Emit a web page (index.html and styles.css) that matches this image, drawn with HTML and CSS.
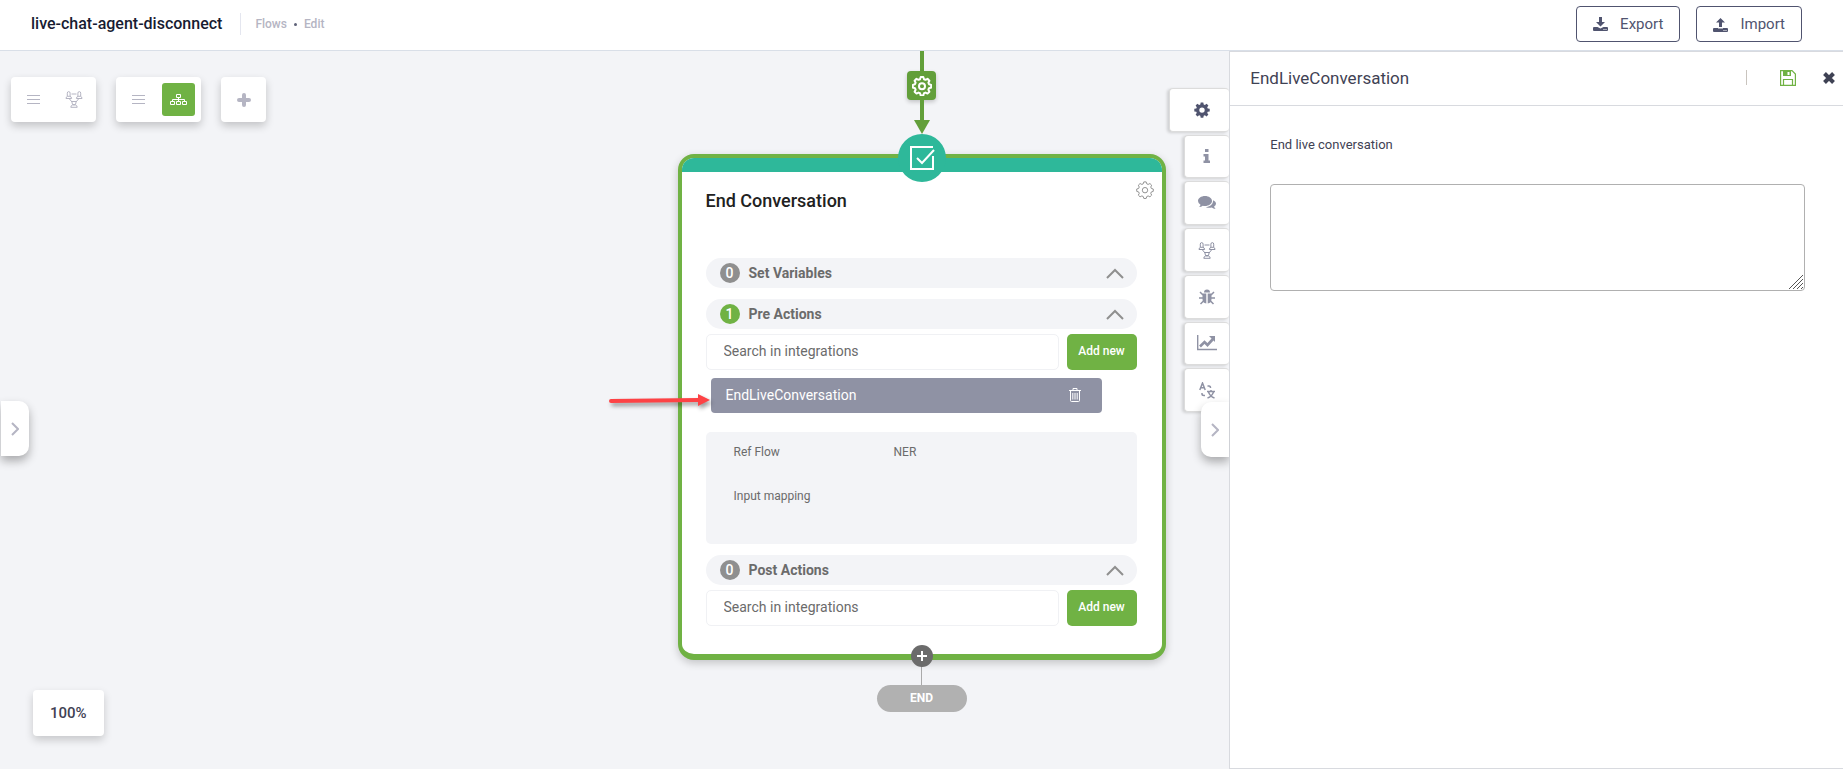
FILE: index.html
```
<!DOCTYPE html>
<html lang="en">
<head>
  <meta charset="UTF-8" />
  <meta name="viewport" content="width=device-width, initial-scale=1" />
  <title>live-chat-agent-disconnect - Flows</title>
  <link rel="stylesheet" href="styles.css">
</head>
<body>
  <!-- shared icons -->
  <svg class="icon-defs" aria-hidden="true">
    <symbol id="icon-cog" viewBox="0 0 20 20">
      <path d="M8.700 1h2.600l.7 2.200 1.500.6 2-1 1.900 1.900-1 2 .6 1.500 2.200.7v2.600l-2.200.7-.6 1.500 1 2-1.900 1.900-2-1-1.500.6-.7 2.200H8.700L8 17.200l-1.500-.6-2 1-1.900-1.900 1-2-.6-1.500L.8 11.500V8.900L3 8.200l.6-1.500-1-2 1.900-1.900 2 1L8 3.200z" stroke-linejoin="round" />
      <circle cx="10" cy="10.200" r="3" />
    </symbol>
    <symbol id="icon-team" viewBox="0 0 18 17">
      <path d="M6.500 3h5M4.500 8l2.500 3M13.500 8L11 11" />
      <path d="M2.300 5.400V2.200Q2.300.6 3.700.6t1.400 1.600v3.200M1 7.500q0-1.800 1.500-2.200h2.400q1.700.4 1.700 2.200zM12.900 5.400V2.200q0-1.600 1.400-1.600t1.400 1.600v3.200M11.400 7.500q0-1.800 1.700-2.200h2.400q1.500.4 1.500 2.200z" />
      <path d="M6.800 10.500h4.400l-.7 3H7.500zM5.800 16.300q0-1.800 1.700-2.300h3q1.700.5 1.700 2.300z" />
    </symbol>
    <symbol id="icon-up" viewBox="0 0 18 11">
      <path d="M1 10l8-8 8 8" />
    </symbol>
    <symbol id="icon-right" viewBox="0 0 8 14">
      <path d="M1 1l6 6-6 6" />
    </symbol>
  </svg>

  <header class="header">
    <h1 class="flow-name">live-chat-agent-disconnect</h1>
    <nav class="breadcrumb">
      <a href="#">Flows</a>
      <span class="dot"></span>
      <a href="#">Edit</a>
    </nav>
    <div class="header-actions">
      <button class="btn-outline">
        <svg width="15" height="15" viewBox="0 0 15 15" fill="currentColor"><path d="M6 0h3v5h3l-4.500 4.500L3 5h3z" /><path d="M1 10h3.500l3 1.500 3-1.500H14q1 0 1 1v2q0 1-1 1H1q-1 0-1-1v-2q0-1 1-1zm9.500 2v1h1v-1zm2 0v1h1v-1z" fill-rule="evenodd" /></svg>
        Export
      </button>
      <button class="btn-outline">
        <svg width="15" height="15" viewBox="0 0 15 15" fill="currentColor"><path d="M7.500 1L12 5.500H9V10H6V5.500H3z" /><path d="M1 11h4v.5h5V11h4q1 0 1 1v2q0 1-1 1H1q-1 0-1-1v-2q0-1 1-1zm9.500 2v1h1v-1zm2 0v1h1v-1z" fill-rule="evenodd" /></svg>
        Import
      </button>
    </div>
  </header>

  <main class="workspace">
    <section class="canvas">
      <div class="connector">
        <span class="line"></span>
        <button class="connector-cog" aria-label="Connection settings">
          <svg class="stroke" width="20" height="20"><use href="#icon-cog" /></svg>
        </button>
        <span class="line"></span>
        <span class="arrow-head"></span>
      </div>

      <article class="node">
        <div class="node-badge">
          <svg width="26" height="26" viewBox="0 0 26 26" fill="none" stroke="#fff" stroke-width="2"><path d="M24 11v13H2V2h22" /><path d="M8 13l5 5L25 5" /></svg>
        </div>
        <div class="node-bar"></div>
        <button class="node-cog" aria-label="Node settings">
          <svg class="stroke" width="18" height="18"><use href="#icon-cog" /></svg>
        </button>

        <div class="node-body">
          <h2 class="node-title">End Conversation</h2>

          <button class="section">
            <span class="count">0</span>Set Variables
            <svg class="stroke chevron" width="18" height="11"><use href="#icon-up" /></svg>
          </button>

          <button class="section">
            <span class="count active">1</span>Pre Actions
            <svg class="stroke chevron" width="18" height="11"><use href="#icon-up" /></svg>
          </button>
          <div class="search-row">
            <input type="text" placeholder="Search in integrations" aria-label="Search in integrations">
            <button class="btn-add">Add new</button>
          </div>

          <div class="integration">
            <span>EndLiveConversation</span>
            <button aria-label="Delete">
              <svg width="12" height="14" viewBox="0 0 12 14" fill="none" stroke="currentColor"><path d="M0 2.500h12M4 2V.5h4V2M1.500 3v9.500q0 1 1 1h7q1 0 1-1V3M3.800 5v6.500M6 5v6.500M8.200 5v6.500" /></svg>
            </button>
          </div>

          <dl class="details">
            <dt>Ref Flow</dt><dd>NER</dd>
            <dt>Input mapping</dt><dd></dd>
          </dl>

          <button class="section">
            <span class="count">0</span>Post Actions
            <svg class="stroke chevron" width="18" height="11"><use href="#icon-up" /></svg>
          </button>
          <div class="search-row">
            <input type="text" placeholder="Search in integrations" aria-label="Search in integrations">
            <button class="btn-add">Add new</button>
          </div>
        </div>

        <svg class="pointer" width="106" height="24" viewBox="0 0 106 24" aria-hidden="true"><path d="M4 12l88-1" stroke="#fd4245" stroke-width="4" stroke-linecap="round" /><path d="M91 5l12 6-12 6z" fill="#fd4245" /></svg>
        <button class="node-plus" aria-label="Add step">
          <svg width="10" height="10" viewBox="0 0 10 10" stroke="#fff" stroke-width="2"><path d="M0 5h10M5 0v10" /></svg>
        </button>
      </article>
      <span class="end-line"></span>
      <div class="end">END</div>
    </section>

    <div class="toolbars">
      <div class="toolbar">
        <button aria-label="List">
          <svg class="stroke" width="13" height="10" viewBox="0 0 13 10"><path d="M0 .5h13M0 4.500h13M0 8.500h13" /></svg>
        </button>
        <button aria-label="Team"><svg class="stroke" width="18" height="17"><use href="#icon-team" /></svg></button>
      </div>
      <div class="toolbar">
        <button aria-label="List view">
          <svg class="stroke" width="13" height="10" viewBox="0 0 13 10"><path d="M0 .5h13M0 4.500h13M0 8.500h13" /></svg>
        </button>
        <button class="selected" aria-label="Tree view">
          <svg width="17" height="13" viewBox="0 0 17 13" fill="none" stroke="currentColor"><path d="M6.500 1.500h4v3h-4zM.500 8.500h4v3h-4zM6.500 8.500h4v3h-4zM12.500 8.500h4v3h-4zM8.500 4.500v4M2.500 8.500v-2h12v2" /></svg>
        </button>
      </div>
      <div class="toolbar">
        <button aria-label="Add"><svg width="14" height="14" viewBox="0 0 14 14" stroke="currentColor" stroke-width="4" stroke-linecap="round"><path d="M2 7h10M7 2v10" /></svg></button>
      </div>
    </div>

    <button class="handle handle-left" aria-label="Open menu"><svg class="stroke" width="8" height="14"><use href="#icon-right" /></svg></button>
    <div class="zoom-level">100%</div>

    <aside class="panel">
      <div class="tabs">
        <button class="current" aria-label="Settings">
          <svg width="16" height="16" viewBox="0 0 16 16" fill="currentColor"><path fill-rule="evenodd" d="M6.700.5h2.600l.4 2 1.200.5 1.700-1.200 1.800 1.800L13.200 5.300l.5 1.200 2 .3v2.600l-2 .4-.5 1.200 1.200 1.600-1.800 1.800-1.700-1.200-1.200.5-.4 2H6.700l-.4-2-1.200-.5-1.700 1.200-1.800-1.800L2.800 11l-.5-1.200-2-.4V6.800l2-.3.5-1.200L1.600 3.600l1.800-1.800L5.100 3l1.200-.5zM8 5.400a2.700 2.700 0 100 5.400 2.700 2.700 0 000-5.400z" /></svg>
        </button>
        <button aria-label="Info">
          <svg width="8" height="15" viewBox="0 0 8 15" fill="currentColor"><path d="M2 0h3.500v3H2zM.5 5h5v6.500H7V14H.5v-2.500H2v-4H.5z" /></svg>
        </button>
        <button aria-label="Comments">
          <svg width="18" height="14" viewBox="0 0 18 14" fill="currentColor"><path d="M7 0c3.900 0 7 2.200 7 5s-3.100 5-7 5q-1.200 0-2.200-.3Q3.200 11 1 11.100q1.300-1.200 1.500-2.400Q0 7.200 0 5c0-2.800 3.100-5 7-5z" /><path d="M15 4.200c2 .8 3 2 3 3.500q0 1.700-1.900 2.900.3 1.300 1.500 2.400-2.200-.1-3.900-1.400-3.200.7-6-.6C11.500 11 15.300 8.600 15 4.200z" /></svg>
        </button>
        <button aria-label="Team"><svg class="stroke" width="18" height="17"><use href="#icon-team" /></svg></button>
        <button aria-label="Debug">
          <svg width="16" height="16" viewBox="0 0 16 16" fill="currentColor"><path d="M5 3.500Q5 .5 8 .5t3 3z" /><path d="M3.500 4.500h3.800v10Q3.500 14 3.500 10zM8.700 4.500h3.800V10q0 4-3.800 4.500z" /><path d="M1 3l3 3M15 3l-3 3M0 9h4M12 9h4M1.500 15L5 11.500M14.500 15L11 11.500" stroke="currentColor" stroke-width="1.500" /></svg>
        </button>
        <button aria-label="Analytics">
          <svg width="20" height="16" viewBox="0 0 20 16" fill="none" stroke="currentColor"><path d="M.7 0v14.500H20" stroke-width="1.400" /><path d="M3 11.500l4.500-4.500 3 3L16 4" stroke-width="2.600" /><path d="M12 1h6v6z" fill="currentColor" stroke="none" /></svg>
        </button>
        <button aria-label="Language">
          <svg width="16" height="17" viewBox="0 0 16 17" fill="none" stroke="currentColor" stroke-width="1.500"><path d="M.8 8L3.500 1l2.700 7M1.500 5.800h4M8.500 4H10q1.500 0 1.500 2M3 11v1q0 1.500 2 1.500h1M8 9.500h8M12 8v1.500M9.500 10q1.500 4.500 6 6M14.500 10q-1.500 4.500-6 6" /></svg>
        </button>
      </div>
      <button class="handle handle-right" aria-label="Close panel"><svg class="stroke" width="8" height="14"><use href="#icon-right" /></svg></button>

      <div class="panel-header">
        <h2>EndLiveConversation</h2>
        <span class="divider"></span>
        <button class="save" aria-label="Save">
          <svg width="16" height="16" viewBox="0 0 16 16" fill="none" stroke="currentColor"><path d="M.6.600h11.400L15.400 4v11.400H.600z" stroke-width="1.200" /><path d="M3.500 15V9.500h9V15" stroke-width="1.200" /><path d="M3 1h8v5H3zm4.500 1v3h2V2z" fill="currentColor" fill-rule="evenodd" stroke="none" /></svg>
        </button>
        <button class="close" aria-label="Close">
          <svg width="12" height="12" viewBox="0 0 12 12" stroke="currentColor" stroke-width="4"><path d="M1.500 1.500l9 9M10.500 1.500l-9 9" /></svg>
        </button>
      </div>
      <div class="panel-body">
        <label for="message">End live conversation</label>
        <div class="textarea-wrap">
          <textarea id="message"></textarea>
          <svg class="grip" width="14" height="14" viewBox="0 0 14 14" stroke="#555"><path d="M0 14L14 0M4 14L14 4M8 14l6-6M12 14l2-2" /></svg>
        </div>
      </div>
    </aside>
  </main>
</body>
</html>
```

FILE: styles.css
```
* {
  box-sizing: border-box;
}

html, body {
  margin: 0;
  height: 100%;
}

body {
  display: flex;
  flex-direction: column;
  overflow: hidden;
  background: #fff;
  font-family: Roboto, "Liberation Sans", sans-serif;
  font-size: 14px;
  color: #3f4254;
}

h1, h2, dl, dd {
  margin: 0;
}

button {
  display: flex;
  align-items: center;
  justify-content: center;
  padding: 0;
  border: none;
  background: none;
  font: inherit;
  color: inherit;
  cursor: pointer;
}

svg {
  display: block;
  flex: none;
}

.icon-defs {
  position: absolute;
  width: 0;
  height: 0;
}

.stroke {
  fill: none;
  stroke: currentColor;
}

/* header */
.header {
  display: flex;
  align-items: center;
  flex: none;
  height: 51px;
  padding: 0 41px 2px 31px;
  border-bottom: 1px solid #d9dfe8;
}

.flow-name {
  padding-right: 18px;
  font-size: 16px;
  font-weight: 500;
  line-height: 22px;
  color: #181c32;
  border-right: 1px solid #e4e6ef;
}

.breadcrumb {
  display: flex;
  align-items: center;
  gap: 7px;
  padding-left: 14px;
  font-size: 12px;
  font-weight: 500;
}

.breadcrumb a {
  color: #b5b5c3;
  text-decoration: none;
}

.dot {
  width: 3px;
  height: 3px;
  border-radius: 50%;
  background: #5e6278;
}

.header-actions {
  display: flex;
  gap: 16px;
  margin-left: auto;
}

.btn-outline {
  gap: 12px;
  height: 36px;
  padding: 0 16px;
  border: 1px solid #50546f;
  border-radius: 4px;
  font-size: 15px;
  color: #50546f;
}

/* workspace: the canvas runs under the side panel */
.workspace {
  position: relative;
  display: grid;
  grid-template-rows: minmax(0, 1fr);
  flex: 1;
  min-height: 0;
}

.canvas, .panel {
  grid-area: 1 / 1;
}

.canvas {
  display: flex;
  flex-direction: column;
  align-items: center;
  background: #f3f4f7;
}

.connector {
  display: flex;
  flex-direction: column;
  align-items: center;
  margin-bottom: 20px;
}

.line {
  width: 4px;
  height: 20px;
  background: #629f3a;
}

.connector-cog {
  width: 29px;
  height: 29px;
  border-radius: 4px;
  background: #629f3a;
  color: #fff;
  box-shadow: 0 2px 4px rgba(0, 0, 0, 0.2);
}

.connector-cog svg {
  stroke-width: 2px;
}

.arrow-head {
  border: 8px solid transparent;
  border-top: 14px solid #629f3a;
  border-bottom: 0;
}

/* node */
.node {
  position: relative;
  flex: none;
  width: 488px;
  border: 4px solid #70b244;
  border-bottom-width: 6px;
  border-radius: 16px;
  background: #fff;
  box-shadow: 0 3px 8px rgba(0, 0, 0, 0.2);
}

.node-bar {
  height: 14px;
  border-radius: 12px 12px 0 0;
  background: #2eb89a;
}

.node-badge {
  position: absolute;
  top: -24px;
  left: 50%;
  display: flex;
  align-items: center;
  justify-content: center;
  width: 48px;
  height: 48px;
  margin-left: -24px;
  border-radius: 50%;
  background: #2eb89a;
}

.node-cog {
  position: absolute;
  top: 23px;
  right: 8px;
  color: #888;
}

.node-body {
  padding: 18px 25px 28px 24px;
  color: #6b6b6b;
}

.node-title {
  margin-bottom: 46px;
  font-size: 18px;
  font-weight: 500;
  line-height: 22px;
  color: #212121;
}

.section {
  width: 100%;
  height: 30px;
  margin-bottom: 11px;
  padding: 0 13px 0 14px;
  border-radius: 15px;
  background: #f3f4f7;
  font-weight: 700;
}

.count {
  width: 20px;
  margin-right: 9px;
  border-radius: 50%;
  background: #8f8f8f;
  font-weight: 500;
  line-height: 20px;
  color: #fff;
}

.count.active {
  background: #70b244;
}

.chevron {
  margin-left: auto;
  color: #8f8f8f;
  stroke-width: 2px;
}

.search-row {
  display: flex;
  gap: 8px;
  margin-top: -6px;
}

.search-row input {
  flex: 1;
  min-width: 0;
  height: 36px;
  padding: 0 17px 2px;
  border: 1px solid #f0f1f4;
  border-radius: 5px;
  background: #fff;
  font: inherit;
}

.search-row input::placeholder {
  color: #6b6b6b;
}

.btn-add {
  width: 70px;
  height: 36px;
  padding-bottom: 2px;
  border-radius: 5px;
  background: #70b244;
  font-size: 12px;
  font-weight: 500;
  color: #fff;
}

.integration {
  display: flex;
  align-items: center;
  justify-content: space-between;
  height: 35px;
  margin: 8px 35px 19px 5px;
  padding: 0 21px 2px 15px;
  border-radius: 4px;
  background: #8f92a4;
  color: #fff;
}

.details {
  display: grid;
  grid-template-columns: 160px 1fr;
  row-gap: 28px;
  height: 112px;
  margin-bottom: 11px;
  padding: 12px 28px;
  border-radius: 5px;
  background: #f3f4f7;
  font-size: 12px;
  line-height: 16px;
  align-content: start;
}

.pointer {
  position: absolute;
  top: 231px;
  left: -75px;
  filter: drop-shadow(2px 3px 2px rgba(0, 0, 0, 0.4));
}

.node-plus {
  position: absolute;
  bottom: -13px;
  left: 50%;
  width: 22px;
  height: 22px;
  margin-left: -11px;
  border-radius: 50%;
  background: #6b6b6b;
}

.end-line {
  width: 1px;
  height: 25px;
  background: #aaa;
}

.end {
  width: 90px;
  border-radius: 14px;
  background: #b1b1b1;
  font-size: 12px;
  font-weight: 700;
  line-height: 27px;
  text-align: center;
  color: #fff;
}

/* floating tools */
.toolbars {
  position: absolute;
  top: 26px;
  left: 11px;
  display: flex;
  gap: 20px;
}

.toolbar {
  display: flex;
  gap: 7px;
  padding: 6px;
  border-radius: 4px;
  background: #fff;
  box-shadow: 0 4px 8px rgba(0, 0, 0, 0.2);
  color: #b5b5c3;
}

.toolbar button {
  width: 33px;
  height: 33px;
  border-radius: 3px;
}

.toolbar .selected {
  background: #70b244;
  color: #fff;
}

.handle {
  position: absolute;
  top: 350px;
  width: 28px;
  height: 55px;
  background: #fff;
  color: #b5b5c3;
  box-shadow: 0 5px 10px rgba(0, 0, 0, 0.3);
}

.handle svg {
  stroke-width: 2px;
}

.handle-left {
  left: 1px;
  border-radius: 0 10px 10px 0;
}

.handle-right {
  right: 100%;
  margin-right: 1px;
  border-radius: 10px 0 0 10px;
  clip-path: inset(-20px 0 -20px -20px);
}

.zoom-level {
  position: absolute;
  bottom: 33px;
  left: 33px;
  padding: 0 17px;
  border-radius: 4px;
  background: #fff;
  box-shadow: 0 4px 8px rgba(0, 0, 0, 0.18);
  font-size: 15px;
  font-weight: 500;
  line-height: 46px;
}

/* side panel */
.panel {
  position: relative;
  justify-self: end;
  width: 33.3%;
  border: 1px solid #d8dadf;
  border-right: none;
  background: #fff;
}

.tabs {
  position: absolute;
  top: 36px;
  right: 100%;
  display: flex;
  flex-direction: column;
  align-items: flex-end;
  gap: 3px;
  height: 324px;
  margin-right: 1px;
}

.tabs button {
  flex: 1;
  width: 45px;
  border: 1px solid #dcdcdc;
  border-right-width: 0;
  border-radius: 4px;
  background: #fff;
  box-shadow: -2px 1px 3px rgba(0, 0, 0, 0.15);
  color: #8f92a4;
}

.tabs .current {
  width: 60px;
  padding-left: 4px;
  color: #50546f;
}

.panel-header {
  display: flex;
  align-items: center;
  height: 54px;
  padding: 0 8px 2px 20px;
  border-bottom: 1px solid #d8dadf;
}

.panel-header h2 {
  flex: 1;
  font-size: 17px;
  font-weight: 400;
}

.divider {
  width: 1px;
  height: 15px;
  background: #c9c4be;
}

.save {
  margin: 0 27px 0 33px;
  color: #70b244;
}

.panel-body {
  padding: 30px 38px 0 40px;
}

.panel-body label {
  display: block;
  margin-bottom: 31px;
  font-size: 13px;
  line-height: 17px;
}

.textarea-wrap {
  position: relative;
}

textarea {
  display: block;
  width: 100%;
  height: 107px;
  padding: 8px;
  border: 1px solid #b0b0b0;
  border-radius: 4px;
  font: inherit;
  resize: none;
}

.grip {
  position: absolute;
  right: 2px;
  bottom: 2px;
}
```
